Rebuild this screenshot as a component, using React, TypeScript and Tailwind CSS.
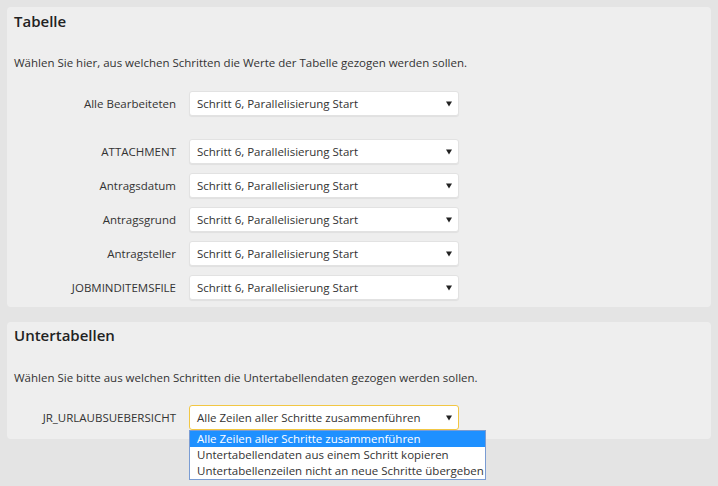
import React from 'react';

const STEP = 'Schritt 6, Parallelisierung Start';

const fields = ['ATTACHMENT', 'Antragsdatum', 'Antragsgrund', 'Antragsteller', 'JOBMINDITEMSFILE'];

const options = [
  'Alle Zeilen aller Schritte zusammenführen',
  'Untertabellendaten aus einem Schritt kopieren',
  'Untertabellenzeilen nicht an neue Schritte übergeben',
];

const Arrow: React.FC = () => (
  <svg width="6" height="6" viewBox="0 0 6 6" className="shrink-0">
    <path d="M0 0.5 L6 0.5 L3 5.5 Z" fill="#222" />
  </svg>
);

const FakeSelect: React.FC<{ value: string; focused?: boolean }> = ({ value, focused }) => (
  <div
    className={
      focused
        ? 'flex items-center justify-between w-[270px] h-[25px] pl-[7px] pr-[6px] bg-white rounded-[3px] border border-[#f2c744]'
        : 'flex items-center justify-between w-[270px] h-[25px] pl-[7px] pr-[6px] bg-white rounded-[3px] border border-[#e2e2e2] shadow-[0_1px_1px_rgba(0,0,0,0.06)]'
    }
  >
    <span className="whitespace-nowrap leading-[16px] text-[#333]">{value}</span>
    <Arrow />
  </div>
);

const Row: React.FC<{ label: string; value: string; focused?: boolean; children?: React.ReactNode }> = ({ label, value, focused, children }) => (
  <div className="flex items-center h-[25px]">
    <div className="w-[162px] text-right text-[#333] whitespace-nowrap leading-[16px]">{label}</div>
    <div className="ml-[13px] relative">
      <FakeSelect value={value} focused={focused} />
      {children}
    </div>
  </div>
);

const App: React.FC = () => {
  return (
    <div
      className="min-h-[486px] bg-[#e4e4e4] p-[7px] text-[11.5px] text-[#333] leading-none"
      style={{ fontFamily: '"Open Sans", "Liberation Sans", sans-serif' }}
    >
      {/* Tabelle */}
      <div className="w-[704px] h-[300px] bg-[#eeeeee] rounded-[4px] px-[7px] pt-[1px]">
        <h2 className="text-[15px] font-semibold text-[#222] h-[26px] flex items-center">Tabelle</h2>
        <p className="mt-[21px] h-[16px] flex items-center">Wählen Sie hier, aus welchen Schritten die Werte der Tabelle gezogen werden sollen.</p>
        <div className="mt-[20px]">
          <Row label="Alle Bearbeiteten" value={STEP} />
        </div>
        <div className="mt-[23px] flex flex-col gap-[9px]">
          {fields.map((f) => (
            <Row key={f} label={f} value={STEP} />
          ))}
        </div>
      </div>

      {/* Untertabellen */}
      <div className="mt-[15px] w-[704px] h-[117px] bg-[#eeeeee] rounded-[4px] px-[7px] pt-0">
        <h2 className="text-[15px] font-semibold text-[#222] h-[26px] flex items-center">Untertabellen</h2>
        <p className="mt-[22px] h-[16px] flex items-center">Wählen Sie bitte aus welchen Schritten die Untertabellendaten gezogen werden sollen.</p>
        <div className="mt-[19px]">
          <Row label="JR_URLAUBSUEBERSICHT" value={options[0]} focused>
            <div className="absolute left-0 top-[25px] w-[297px] bg-white border border-[#7a9cd3] z-10">
              {options.map((o, i) => (
                <div
                  key={o}
                  className={
                    i === 0
                      ? 'h-[16px] flex items-center px-[7px] bg-[#1e90ff] text-white whitespace-nowrap'
                      : 'h-[16px] flex items-center px-[7px] text-[#333] whitespace-nowrap'
                  }
                >
                  {o}
                </div>
              ))}
            </div>
          </Row>
        </div>
      </div>
    </div>
  );
};

export default App;
